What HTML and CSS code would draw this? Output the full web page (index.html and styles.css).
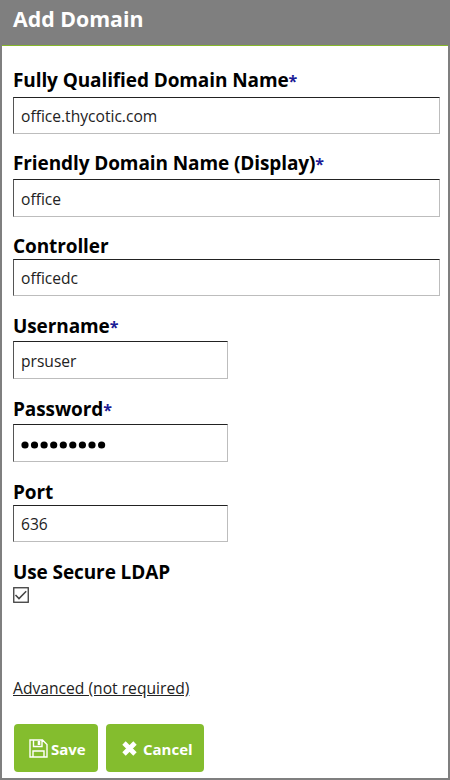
FILE: index.html
```html
<!DOCTYPE html>
<html lang="en">
<head>
<meta charset="utf-8">
<title>Add Domain</title>
<link rel="stylesheet" href="styles.css">
</head>
<body>
<form class="dialog">
  <h1 class="title">Add Domain</h1>
  <div class="fields">
    <div class="field"><label class="label">Fully Qualified Domain Name<span class="req">*</span></label><div class="input">office.thycotic.com</div></div>
    <div class="field friendly"><label class="label">Friendly Domain Name (Display)<span class="req">*</span></label><div class="input">office</div></div>
    <div class="field controller"><label class="label">Controller</label><div class="input">officedc</div></div>
    <div class="field username"><label class="label">Username<span class="req">*</span></label><div class="input short">prsuser</div></div>
    <div class="field password"><label class="label">Password<span class="req">*</span></label><div class="input short"><svg class="dots" width="86" height="10" viewBox="0 0 86 10"><circle cx="4" cy="5" r="3.6"/><circle cx="13.5" cy="5" r="3.6"/><circle cx="23.1" cy="5" r="3.6"/><circle cx="32.7" cy="5" r="3.6"/><circle cx="42.3" cy="5" r="3.6"/><circle cx="51.8" cy="5" r="3.6"/><circle cx="61.4" cy="5" r="3.6"/><circle cx="71" cy="5" r="3.6"/><circle cx="80.6" cy="5" r="3.6"/></svg></div></div>
    <div class="field port"><label class="label">Port</label><div class="input short">636</div></div>
    <div class="field ldap"><label class="label">Use Secure LDAP</label>
      <svg class="check" width="16" height="16" viewBox="0 0 16 16"><rect x=".75" y=".75" width="14.5" height="14.5" fill="#fff" stroke="#3c3c3c" stroke-width="1.3"/><path d="M2.5 8l3.5 3.6 7.2-7.4" fill="none" stroke="#444" stroke-width="1.5"/></svg>
    </div>
  </div>
  <a class="advanced">Advanced (not required)</a>
  <div class="actions">
    <button type="button" class="btn save"><svg width="19" height="19" viewBox="0 0 19 19" fill="none" stroke="#fff" stroke-width="1.4"><path d="M1 1h12.5L18 5.5V18H1zM4.5 1v6.5h8.5V1M4 18v-6h11v6"/><path d="M10 2v4" stroke-width="2.6"/></svg><span>Save</span></button>
    <button type="button" class="btn cancel"><svg width="17" height="17" viewBox="0 0 17 17"><path d="M3 3l11 11M14 3L3 14" stroke="#fff" stroke-width="4.8"/></svg><span>Cancel</span></button>
  </div>
</form>
</body>
</html>
```
FILE: styles.css
```css
* { box-sizing: border-box; }
body { margin: 0; font-family: "Open Sans", "Noto Sans", sans-serif; color: #000; }
.dialog { width: 450px; height: 780px; border: 2px solid #7f7f7f; border-top: 0; background: #fff; overflow: hidden; }
.title { margin: 0; height: 46px; padding: 5px 0 0 11px; background: #7f7f7f; border-bottom: 1px solid #86b72b; color: #fff; font-size: 21.3px; line-height: 28px; font-weight: 700; white-space: nowrap; }
.fields { height: 616px; padding: 21px 9px 0 11px; }
.field { height: 83px; }
.friendly { height: 83px; }
.controller { height: 80px; }
.port { height: 80px; }
.label { display: block; height: 30px; font-size: 19px; line-height: 26px; font-weight: 700; letter-spacing: -0.1px; white-space: nowrap; }
.friendly .label { height: 29px; }
.controller .label { height: 26px; }
.username .label, .password .label { height: 28px; }
.port .label { height: 26px; }
.req { color: #1c1c96; font-size: 16px; }
.input { display: flex; align-items: center; width: 427px; height: 37px; padding: 0 0 0 7px; border: 1px solid #bdbdbd; border-top: 1.5px solid #222; border-left-color: #555; font-size: 15.6px; line-height: 22px; color: #222; }
.friendly .input { height: 38px; padding-top: 2px; }
.input.short { width: 215px; height: 38px; padding-top: 2px; }
.port .input.short { height: 37px; padding-top: 1px; }
.dots { display: block; margin-top: 2px; }
.check { display: block; }
.ldap .label { height: 28px; }
.advanced { display: block; margin: 14px 0 0 11px; width: max-content; height: 24px; font-size: 15.65px; line-height: 24px; color: #222; text-decoration: underline; white-space: nowrap; }
.actions { display: flex; gap: 8px; margin: 24px 0 0 12px; }
.btn { display: flex; align-items: center; height: 48px; border: 0; border-radius: 4px; background: #84bd2e; color: #fff; font: 700 15px "Open Sans", sans-serif; padding: 1px 0 0 15px; white-space: nowrap; }
.save { width: 84px; gap: 3px; }
.cancel { width: 98px; gap: 5px; }
```
